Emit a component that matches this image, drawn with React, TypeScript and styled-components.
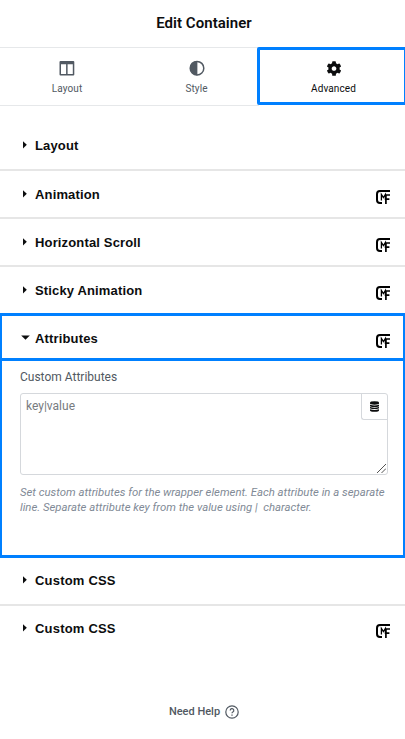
import React from "react";
import styled, { createGlobalStyle, css } from "styled-components";

const BLUE = "#0080ff";

const GlobalStyle = createGlobalStyle`
  *, *::before, *::after { box-sizing: border-box; }
  body { margin: 0; background: #fff; font-family: Roboto, sans-serif; }
`;

const Panel = styled.main`
  display: flex;
  flex-direction: column;
  width: 405px;
  height: 739px;
  background: #fff;
  overflow: hidden;
`;

const Header = styled.header`
  flex: none;
  height: 47px;
  padding-bottom: 1px;
  padding-left: 3px;
  display: flex;
  align-items: center;
  justify-content: center;
`;

const Title = styled.h1`
  margin: 0;
  font-size: 15px;
  line-height: 18px;
  font-weight: 600;
  letter-spacing: 0.05px;
  color: #0c0d0e;
`;

const Tabs = styled.nav`
  flex: none;
  display: grid;
  grid-template-columns: 134px 125px 148px;
  height: 59px;
`;

const Tab = styled.button<{ $active?: boolean }>`
  display: flex;
  flex-direction: column;
  align-items: center;
  gap: 6px;
  margin: 0;
  padding: 12px 0 0;
  background: none;
  font: 400 10px/13px Roboto, sans-serif;
  letter-spacing: 0.1px;
  border: 0 solid #e6e8ea;
  border-width: 1px 0;
  color: #515962;
  svg { display: block; }
  ${(p) =>
    p.$active &&
    css`
      height: 58px;
      margin-left: -2px;
      padding: 10px 0 0 3px;
      border: 3px solid ${BLUE};
      border-radius: 2px;
      color: #0c0d0e;
    `}
`;

const Sections = styled.div`
  flex: none;
  padding-top: 16px;
`;

const Row = styled.div<{ $height?: number; $divider?: boolean; $lift?: number }>`
  display: flex;
  align-items: center;
  height: ${(p) => p.$height ?? 48}px;
  padding: 0 15px ${(p) => p.$lift ?? 0}px 22px;
  border-bottom: ${(p) => (p.$divider ? "2px solid #e6e6e6" : "0")};
`;

const Caret = styled.svg<{ $open?: boolean }>`
  flex: none;
  width: 8px;
  height: 8px;
  margin: ${(p) => (p.$open ? -2 : 0)}px 5px 0 0;
  overflow: visible;
`;

const RowTitle = styled.h2<{ $tracking?: number }>`
  margin: 0;
  flex: 1;
  padding-top: 1px;
  font: 700 13px/18px "Liberation Sans", Arial, sans-serif;
  letter-spacing: ${(p) => p.$tracking ?? 0.15}px;
  color: #0c0d0e;
`;

const Badge = styled.svg`
  flex: none;
  width: 14px;
  height: 14px;
  margin-top: 6px;
`;

const OpenSection = styled.section`
  height: 245px;
  border: solid ${BLUE};
  border-width: 3px 2px;
`;

const OpenHead = styled.div`
  display: flex;
  align-items: center;
  height: 45px;
  padding: 2px 13px 0 20px;
  border-bottom: 3px solid ${BLUE};
`;

const Body = styled.div`
  padding: 8px 15px 0 18px;
`;

const Label = styled.label`
  display: block;
  font-size: 12px;
  line-height: 16px;
  color: #515962;
`;

const Field = styled.div`
  display: flex;
  position: relative;
  justify-content: space-between;
  height: 82px;
  margin-top: 8px;
  border: 1px solid #d5d8dc;
  border-radius: 3px;
`;

const Placeholder = styled.span`
  padding: 4px 5px;
  font-size: 12px;
  line-height: 16px;
  color: #777b80;
`;

const DynamicButton = styled.button`
  display: flex;
  align-items: center;
  justify-content: center;
  width: 26px;
  height: 26px;
  padding: 0 0 1px;
  background: none;
  border: 0 solid #d5d8dc;
  border-width: 0 0 1px 1px;
  border-radius: 0 0 0 3px;
`;

const Resizer = styled.svg`
  position: absolute;
  right: 1px;
  bottom: 1px;
`;

const Description = styled.p`
  margin: 10px 0 0;
  font-size: 11.35px;
  line-height: 15px;
  font-style: italic;
  color: #818a96;
`;

const Line = styled.span`
  display: block;
  white-space: nowrap;
`;

const Help = styled.footer`
  display: flex;
  align-items: center;
  justify-content: center;
  gap: 5px;
  margin-top: 54px;
  padding-left: 3px;
  font-size: 11px;
  line-height: 16px;
  font-weight: 500;
  color: #515962;
`;

const Arrow = ({ open }: { open?: boolean }) => (
  <Caret $open={open} viewBox="0 0 8 8">
    <path d={open ? "M-.8 2.5H7.8L3.5 6.8z" : "M1 .2V7.4L4.8 3.8z"} fill="#0c0d0e" />
  </Caret>
);

const MFBadge = () => (
  <Badge viewBox="0 0 14 14" fill="none" stroke="#000">
    <path d="M14 1H4Q1 1 1 4V10Q1 13 4 13H6" strokeWidth="2" />
    <path d="M5.4 10.6V4.4L7.4 7.6L9.4 4.4V10" strokeWidth="1.3" />
    <path d="M9.9 14V5H14M9.9 9.2H13.4" strokeWidth="1.7" />
  </Badge>
);

const ColumnsIcon = () => (
  <svg width="16" height="16" viewBox="0 0 16 16">
    <path fillRule="evenodd" fill="#515962" d="M1.5 1h12.8q1 0 1 1v12.5q0 1-1 1H1.5q-1 0-1-1V2q0-1 1-1zM2 4.2V14h5.1V4.2zM8.6 4.2V14h5.2V4.2z" />
  </svg>
);

const ContrastIcon = () => (
  <svg width="16" height="16" viewBox="0 0 16 16">
    <circle cx="8" cy="8.2" r="6.8" fill="none" stroke="#515962" strokeWidth="1.5" />
    <path d="M8.4 1a7.2 7.2 0 0 0 0 14.4z" fill="#515962" />
  </svg>
);

const GearIcon = () => (
  <svg width="16" height="16" viewBox="0 0 512 512">
    <path
      fill="#0c0d0e"
      transform="translate(16 32) scale(.94)"
      d="M487.4 315.7l-42.6-24.6c4.3-23.2 4.3-47 0-70.2l42.6-24.6c4.9-2.8 7.1-8.6 5.5-14-11.1-35.6-30-67.8-54.7-94.6-3.8-4.1-10-5.1-14.8-2.3L380.8 110c-17.9-15.4-38.5-27.3-60.8-35.1V25.8c0-5.6-3.9-10.5-9.4-11.7-36.7-8.2-74.3-7.8-109.2 0-5.5 1.2-9.4 6.1-9.4 11.7V75c-22.2 7.9-42.8 19.8-60.8 35.1L88.7 85.5c-4.9-2.8-11-1.9-14.8 2.3-24.7 26.7-43.6 58.9-54.7 94.6-1.7 5.4.6 11.2 5.5 14L67.3 221c-4.3 23.2-4.3 47 0 70.2l-42.6 24.6c-4.9 2.8-7.1 8.6-5.5 14 11.1 35.6 30 67.8 54.7 94.6 3.8 4.1 10 5.1 14.8 2.3l42.6-24.6c17.9 15.4 38.5 27.3 60.8 35.1v49.2c0 5.6 3.9 10.5 9.4 11.7 36.7 8.2 74.3 7.8 109.2 0 5.5-1.2 9.4-6.1 9.4-11.7v-49.2c22.2-7.9 42.8-19.8 60.8-35.1l42.6 24.6c4.9 2.8 11 1.9 14.8-2.3 24.7-26.7 43.6-58.9 54.7-94.6 1.5-5.5-.7-11.3-5.6-14.1zM256 336c-44.1 0-80-35.9-80-80s35.9-80 80-80 80 35.9 80 80-35.9 80-80 80z"
    />
  </svg>
);

const DatabaseIcon = () => (
  <svg width="9" height="11" viewBox="0 0 9 11" fill="#0c0d0e">
    <path d="M0 1.6Q0 .3 4.5 .3T9 1.6V2.6Q9 3.7 4.5 3.7T0 2.6z" />
    <path d="M0 3.7Q4.5 5.3 9 3.7V4.9Q9 5.9 4.5 5.9T0 4.9zM0 6Q4.5 7.6 9 6V7.1Q9 8.1 4.5 8.1T0 7.1zM0 8.2Q4.5 9.8 9 8.2V9.4Q9 10.7 4.5 10.7T0 9.4z" />
  </svg>
);

const HelpIcon = () => (
  <svg width="14" height="14" viewBox="0 0 14 14" fill="none" stroke="#515962">
    <circle cx="7" cy="7" r="6.2" strokeWidth="1.2" />
    <path d="M5.2 5.5a1.8 1.8 0 1 1 2.7 1.5Q7 7.5 7 8.3" strokeWidth="1.2" />
    <path d="M7 9.5v1.3" strokeWidth="1.3" />
  </svg>
);

type SectionProps = {
  title: string;
  badge?: boolean;
  divider?: boolean;
  height?: number;
  lift?: number;
  tracking?: number;
};

const Section = ({ title, badge, divider, height, lift, tracking }: SectionProps) => (
  <Row $divider={divider} $height={height} $lift={lift}>
    <Arrow />
    <RowTitle $tracking={tracking}>{title}</RowTitle>
    {badge && <MFBadge />}
  </Row>
);

export default function App() {
  return (
    <>
      <GlobalStyle />
      <Panel>
        <Header>
          <Title>Edit Container</Title>
        </Header>
        <Tabs>
          <Tab><ColumnsIcon />Layout</Tab>
          <Tab><ContrastIcon />Style</Tab>
          <Tab $active><GearIcon />Advanced</Tab>
        </Tabs>
        <Sections>
          <Section title="Layout" divider height={49} lift={1} />
          <Section title="Animation" badge divider />
          <Section title="Horizontal Scroll" badge divider />
          <Section title="Sticky Animation" badge height={46} />
          <OpenSection>
            <OpenHead>
              <Arrow open />
              <RowTitle>Attributes</RowTitle>
              <MFBadge />
            </OpenHead>
            <Body>
              <Label>Custom Attributes</Label>
              <Field>
                <Placeholder>key|value</Placeholder>
                <DynamicButton aria-label="Dynamic tags"><DatabaseIcon /></DynamicButton>
                <Resizer width="9" height="9" viewBox="0 0 9 9" stroke="#555" strokeWidth="1">
                  <path d="M0 9L9 0M4.5 9L9 4.5" />
                </Resizer>
              </Field>
              <Description>
                <Line>Set custom attributes for the wrapper element. Each attribute in a separate</Line>
                <Line>line. Separate attribute key from the value using |&nbsp; character.</Line>
              </Description>
            </Body>
          </OpenSection>
          <Section title="Custom CSS" divider lift={2} tracking={0.2} />
          <Section title="Custom CSS" badge height={44} tracking={0.2} />
        </Sections>
        <Help>Need Help<HelpIcon /></Help>
      </Panel>
    </>
  );
}
